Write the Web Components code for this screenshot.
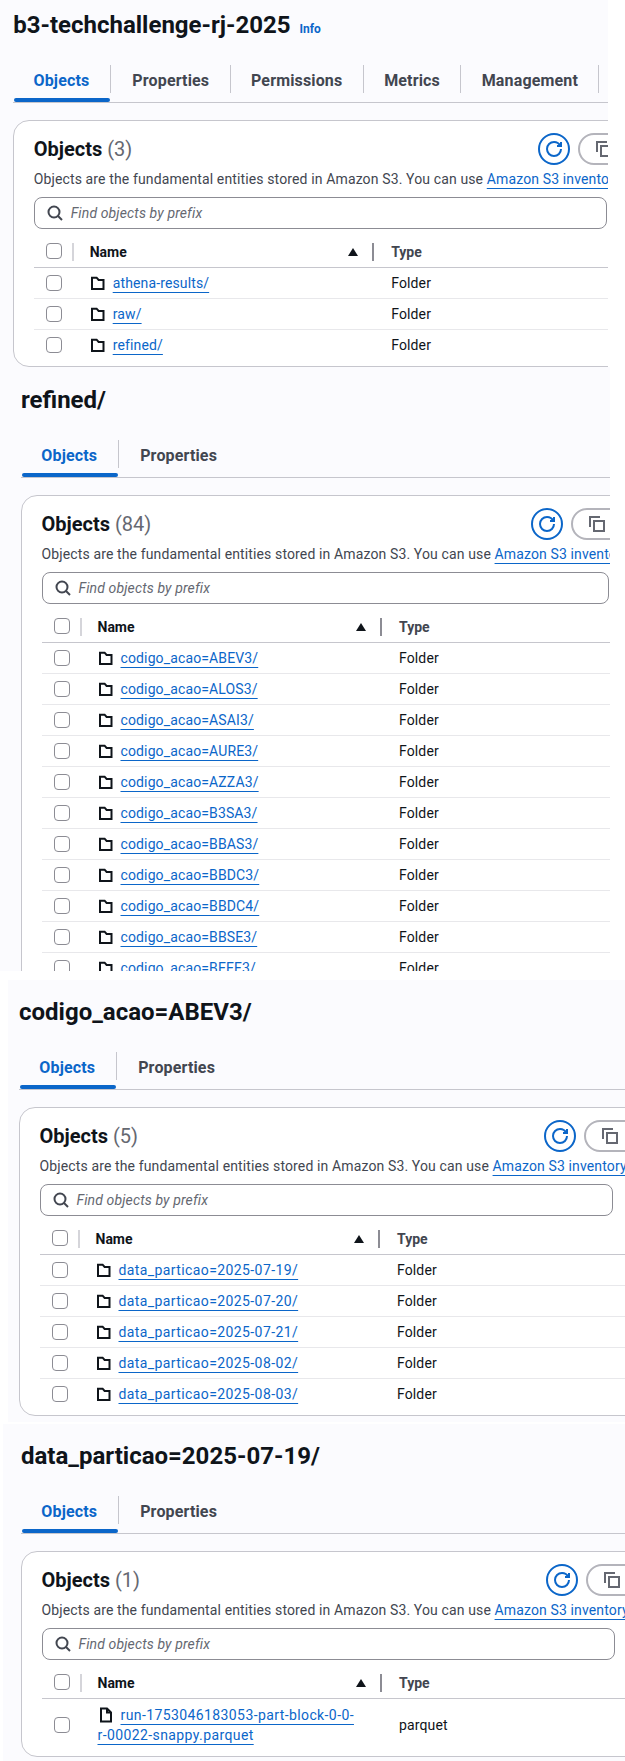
<!DOCTYPE html>
<html>
<head>
<meta charset="utf-8">
<title>S3 objects</title>
<style>
  html, body { margin: 0; background: #fff; }
  body { font-family: Roboto, "Noto Sans", sans-serif; color: #0f141a; }
</style>
</head>
<body>

<s3-view heading="b3-techchallenge-rj-2025" info="Info" count="3"
  tabs="Objects,Properties,Permissions,Metrics,Management,"
  style="--w:608px;--h:367px;--pt:9px;--pl:12.7px">
  <s3-row name="athena-results/" type="Folder"></s3-row>
  <s3-row name="raw/" type="Folder"></s3-row>
  <s3-row name="refined/" type="Folder"></s3-row>
</s3-view>

<s3-view heading="refined/" count="84" tabs="Objects,Properties"
  style="--w:610px;--h:604px;--pt:17px;--pl:20.5px;--search:567px;--tool:489px">
  <s3-row name="codigo_acao=ABEV3/" type="Folder"></s3-row>
  <s3-row name="codigo_acao=ALOS3/" type="Folder"></s3-row>
  <s3-row name="codigo_acao=ASAI3/" type="Folder"></s3-row>
  <s3-row name="codigo_acao=AURE3/" type="Folder"></s3-row>
  <s3-row name="codigo_acao=AZZA3/" type="Folder"></s3-row>
  <s3-row name="codigo_acao=B3SA3/" type="Folder"></s3-row>
  <s3-row name="codigo_acao=BBAS3/" type="Folder"></s3-row>
  <s3-row name="codigo_acao=BBDC3/" type="Folder"></s3-row>
  <s3-row name="codigo_acao=BBDC4/" type="Folder"></s3-row>
  <s3-row name="codigo_acao=BBSE3/" type="Folder"></s3-row>
  <s3-row name="codigo_acao=BEEF3/" type="Folder"></s3-row>
</s3-view>

<s3-view heading="codigo_acao=ABEV3/" count="5" tabs="Objects,Properties"
  style="--mt:9px;--ml:8px;--w:617px;--h:442px;--pt:16px;--pl:10.5px;--ls:.4px">
  <s3-row name="data_particao=2025-07-19/" type="Folder"></s3-row>
  <s3-row name="data_particao=2025-07-20/" type="Folder"></s3-row>
  <s3-row name="data_particao=2025-07-21/" type="Folder"></s3-row>
  <s3-row name="data_particao=2025-08-02/" type="Folder"></s3-row>
  <s3-row name="data_particao=2025-08-03/" type="Folder"></s3-row>
</s3-view>

<s3-view heading="data_particao=2025-07-19/" count="1" tabs="Objects,Properties"
  style="--mt:2px;--ml:3px;--w:622px;--h:337px;--pt:16px;--pl:17.5px;--ls:.4px">
  <s3-row name="run-1753046183053-part-block-0-0-r-00022-snappy.parquet" type="parquet" icon="file"></s3-row>
</s3-view>

<script>
const ICONS = {
  folder: '<path d="M2 2.7h4.6l2 2.3h4.9v9H2z"/>',
  file: '<path d="M3 1.5h6l4 4v9H3z"/><path d="M9 1.5v4h4"/>'
};

const viewTemplate = document.createElement("template");
viewTemplate.innerHTML = `
<style>
  :host {
    display: block;
    box-sizing: border-box;
    margin: var(--mt, 0) 0 0 var(--ml, 0);
    width: var(--w);
    height: var(--h);
    padding: var(--pt) 0 0 var(--pl);
    overflow: hidden;
    background: #fbfbfe;
  }
  header { display: flex; align-items: baseline; gap: 9px; height: 32px; padding-left: .5px; }
  h1 { margin: 0; font-size: 24px; line-height: 32px; font-weight: 700; white-space: nowrap; }
  .info { font-size: 12px; font-weight: 700; color: #0b66c9; }
  s3-tabs { margin-top: 24px; }
  .panel {
    box-sizing: border-box;
    width: 760px;
    margin-top: 16.5px;
    padding: 12px 20px 5px;
    border: 1px solid #c6c6cd;
    border-radius: 16px;
    background: #fff;
  }
  .top { display: flex; align-items: center; height: 32px; }
  h2 { flex: none; width: var(--tool, 504.5px); margin: 0; font-size: 20px; line-height: 24px; font-weight: 700; }
  h2 span { font-weight: 400; color: #656871; }
  .round { flex: none; box-sizing: border-box; width: 32px; height: 32px; border: 2px solid #0b66c9; border-radius: 50%; display: flex; align-items: center; justify-content: center; color: #0b66c9; }
  .pill { flex: none; box-sizing: border-box; width: 90px; height: 32px; margin-left: 8px; padding-left: 16px; border: 2px solid #b4b4bb; border-radius: 16px; display: flex; align-items: center; color: #656871; }
  svg { width: 16px; height: 16px; fill: none; stroke: currentColor; stroke-width: 2; }
  p { margin: 4px 0 0; font-size: 14px; line-height: 20px; letter-spacing: .13px; color: #424650; white-space: nowrap; }
  p a { color: #0b66c9; text-decoration: underline; text-underline-offset: 4px; text-decoration-thickness: 1px; }
  .search { box-sizing: border-box; width: var(--search, 573.5px); height: 32px; margin-top: 8px; padding-left: 12px; border: 1px solid #8c8c94; border-radius: 8px; display: flex; align-items: center; gap: 8px; background: #fff; color: #424650; }
  .search span { font-size: 14px; letter-spacing: .13px; font-style: italic; color: #656871; }
  .head {
    display: grid;
    grid-template-columns: 56px 284.5px 1fr;
    align-items: center;
    height: 30px;
    margin-top: 8px;
    border-bottom: 1px solid #c6c6cd;
    font-size: 14px;
    font-weight: 700;
    color: #0f141a;
  }
  .check { box-sizing: border-box; display: block; width: 16px; height: 16px; margin-left: 12.5px; border: 1.5px solid #8c8c94; border-radius: 4px; background: #fff; }
  .c0 { height: 18px; position: relative; }
  .c0::after { content: ""; position: absolute; left: 38px; top: 0; width: 2px; height: 18px; background: #d5d5da; }
  .c1 { display: flex; align-items: center; justify-content: space-between; height: 18px; padding-right: 14px; box-sizing: border-box; border-right: 2px solid #8c8c94; }
  .tri { width: 0; height: 0; border-left: 5px solid transparent; border-right: 5px solid transparent; border-bottom: 8px solid #0f141a; }
  .c2 { padding-left: 17px; color: #424650; }
</style>
<header><h1 class="title"></h1><span class="info"></span></header>
<s3-tabs></s3-tabs>
<section class="panel">
  <div class="top">
    <h2>Objects <span class="count"></span></h2>
    <div class="round"><svg viewBox="0 0 16 16"><path d="M15 8c0 3.87-3.13 7-7 7s-7-3.13-7-7 3.13-7 7-7c2.79 0 5.2 1.63 6.33 4"/><path d="M15 1v4h-4"/></svg></div>
    <div class="pill"><svg viewBox="0 0 16 16"><path d="M1 11V1h10"/><rect x="5" y="5" width="10" height="10"/></svg></div>
  </div>
  <p>Objects are the fundamental entities stored in Amazon S3. You can use <a>Amazon S3 inventory</a></p>
  <div class="search">
    <svg viewBox="0 0 16 16"><circle cx="7" cy="7" r="5.5"/><path d="M11 11l4 4"/></svg>
    <span>Find objects by prefix</span>
  </div>
  <div class="head">
    <div class="c0"><i class="check"></i></div>
    <div class="c1"><span>Name</span><i class="tri"></i></div>
    <div class="c2">Type</div>
  </div>
  <slot></slot>
</section>
`;

class S3View extends HTMLElement {
  constructor() {
    super();
    this.attachShadow({ mode: "open" });
  }

  connectedCallback() {
    const view = viewTemplate.content.cloneNode(true);
    view.querySelector(".title").textContent = this.getAttribute("heading");
    view.querySelector(".info").textContent = this.getAttribute("info") || "";
    view.querySelector(".count").textContent = "(" + this.getAttribute("count") + ")";
    view.querySelector("s3-tabs").setAttribute("items", this.getAttribute("tabs"));
    this.shadowRoot.appendChild(view);
  }
}

class S3Tabs extends HTMLElement {
  constructor() {
    super();
    this.attachShadow({ mode: "open" });
  }

  connectedCallback() {
    const items = (this.getAttribute("items") || "").split(",");
    this.shadowRoot.innerHTML = `
      <style>
        :host { display: block; box-sizing: border-box; width: 760px; height: 38px; border-bottom: 1.5px solid #c6c6cd; padding-left: 1.5px; }
        nav { display: flex; height: 37px; }
        a { position: relative; height: 28px; padding: 0 20.4px; border-right: 1px solid #c6c6cd; font-size: 16px; font-weight: 700; letter-spacing: .15px; line-height: 32px; color: #424650; white-space: nowrap; }
        a:first-child { padding-left: 19.3px; padding-right: 21px; }
        a:nth-child(2) { padding-left: 21px; }
        a:last-child { border-right: 0; }
        a.on { color: #0b66c9; }
        a.on::after { content: ""; position: absolute; left: 0; right: 0; top: 33px; height: 4px; border-radius: 2px; background: #0b66c9; }
      </style>
      <nav>${items.map((t, i) => `<a class="${i === 0 ? "on" : ""}">${t}</a>`).join("")}</nav>`;
  }
}

class S3Row extends HTMLElement {
  constructor() {
    super();
    this.attachShadow({ mode: "open" });
  }

  connectedCallback() {
    const icon = ICONS[this.getAttribute("icon") || "folder"];
    this.shadowRoot.innerHTML = `
      <style>
        :host { display: grid; grid-template-columns: 56px 301.5px 1fr; align-items: center; box-sizing: border-box; min-height: 31px; padding: 5px 0; border-bottom: 1px solid #e8e8eb; font-size: 14px; line-height: 20px; letter-spacing: .13px; }
        :host(:last-child) { border-bottom: 0; }
        :host([icon]) { padding: 6px 0; }
        i { box-sizing: border-box; display: block; width: 16px; height: 16px; margin-left: 12.5px; border: 1.5px solid #8c8c94; border-radius: 4px; background: #fff; }
        .name { max-width: 264px; }
        svg { width: 16px; height: 16px; margin-right: 7px; vertical-align: -3px; fill: none; stroke: #0f141a; stroke-width: 2; }
        a { letter-spacing: var(--ls, .13px); color: #0b66c9; text-decoration: underline; text-underline-offset: 4px; text-decoration-thickness: 1px; }
      </style>
      <div><i></i></div>
      <div class="name"><svg viewBox="0 0 16 16">${icon}</svg><a>${this.getAttribute("name")}</a></div>
      <div>${this.getAttribute("type")}</div>`;
  }
}

customElements.define("s3-tabs", S3Tabs);
customElements.define("s3-row", S3Row);
customElements.define("s3-view", S3View);
</script>
</body>
</html>
